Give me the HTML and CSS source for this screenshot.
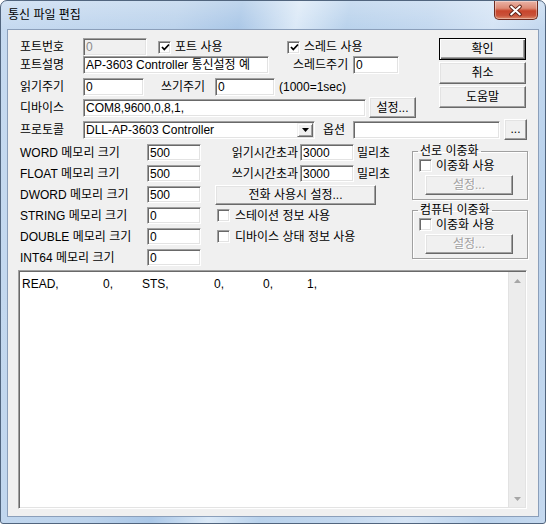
FILE: index.html
```html
<!DOCTYPE html>
<html lang="ko">
<head>
<meta charset="utf-8">
<title>통신 파일 편집</title>
<link rel="stylesheet" href="styles.css">
</head>
<body>
<div class="window">
  <div class="titlebar">
    <span class="title">통신 파일 편집</span>
    <div class="close">
      <svg width="44" height="19" viewBox="0 0 44 19">
        <path d="M17.5 5.5 L26.5 13.5 M26.5 5.5 L17.5 13.5" stroke="#5a1f14" stroke-width="4" stroke-linecap="round"/>
        <path d="M17.5 5.5 L26.5 13.5 M26.5 5.5 L17.5 13.5" stroke="#ffffff" stroke-width="2" stroke-linecap="round"/>
      </svg>
    </div>
  </div>
  <div class="client">
    <div class="top">
      <div class="top-left">
        <div class="row r1">
          <span class="lbl">포트번호</span>
          <div class="field disabled w-port">0</div>
          <span class="check checked ml-chk1"><svg width="9" height="9" viewBox="0 0 9 9"><path d="M1 4 L3.3 6.5 L8 1.5" fill="none" stroke="#000" stroke-width="1.8"/></svg></span>
          <span class="chk-text w-chk1">포트 사용</span>
          <span class="check checked"><svg width="9" height="9" viewBox="0 0 9 9"><path d="M1 4 L3.3 6.5 L8 1.5" fill="none" stroke="#000" stroke-width="1.8"/></svg></span>
          <span class="chk-text">스레드 사용</span>
        </div>
        <div class="row r2">
          <span class="lbl">포트설명</span>
          <div class="field w-desc">AP-3603 Controller 통신설정 예</div>
          <span class="lbl-thread">스레드주기</span>
          <div class="field w-thread">0</div>
        </div>
        <div class="row r3">
          <span class="lbl">읽기주기</span>
          <div class="field w-read">0</div>
          <span class="lbl-write">쓰기주기</span>
          <div class="field w-write">0</div>
          <span class="unit">(1000=1sec)</span>
        </div>
        <div class="row r4">
          <span class="lbl">디바이스</span>
          <div class="field w-dev">COM8,9600,0,8,1,</div>
          <div class="btn btn-set">설정...</div>
        </div>
      </div>
      <div class="buttons">
        <div class="btn btn-main default">확인</div>
        <div class="btn btn-main">취소</div>
        <div class="btn btn-main">도움말</div>
      </div>
    </div>
    <div class="row r5">
      <span class="lbl">프로토콜</span>
      <div class="field combo">
        <span class="combo-text">DLL-AP-3603 Controller</span>
        <span class="combo-btn"><svg width="7" height="4" viewBox="0 0 7 4"><path d="M0 0 H7 L3.5 4 Z" fill="#000"/></svg></span>
      </div>
      <span class="lbl-opt">옵션</span>
      <div class="field w-opt"></div>
      <div class="btn btn-dots">...</div>
    </div>
    <div class="mid">
      <div class="col1">
        <div class="mrow"><span class="lbl-mem">WORD 메모리 크기</span><div class="field small w-mem">500</div></div>
        <div class="mrow"><span class="lbl-mem">FLOAT 메모리 크기</span><div class="field small w-mem">500</div></div>
        <div class="mrow"><span class="lbl-mem">DWORD 메모리 크기</span><div class="field small w-mem">500</div></div>
        <div class="mrow"><span class="lbl-mem">STRING 메모리 크기</span><div class="field small w-mem">0</div></div>
        <div class="mrow"><span class="lbl-mem">DOUBLE 메모리 크기</span><div class="field small w-mem">0</div></div>
        <div class="mrow"><span class="lbl-mem">INT64 메모리 크기</span><div class="field small w-mem">0</div></div>
      </div>
      <div class="col2">
        <div class="mrow"><span class="lbl-time">읽기시간초과</span><div class="field small w-mem">3000</div><span class="ms">밀리초</span></div>
        <div class="mrow"><span class="lbl-time">쓰기시간초과</span><div class="field small w-mem">3000</div><span class="ms">밀리초</span></div>
        <div class="mrow"><div class="btn btn-phone">전화 사용시 설정...</div></div>
        <div class="mrow"><span class="check ml-chk2"></span><span class="chk-text">스테이션 정보 사용</span></div>
        <div class="mrow"><span class="check ml-chk2"></span><span class="chk-text">디바이스 상태 정보 사용</span></div>
      </div>
      <div class="col3">
        <fieldset class="group">
          <legend>선로 이중화</legend>
          <div class="grow"><span class="check"></span><span class="chk-text">이중화 사용</span></div>
          <div class="btn btn-gset disabled-btn">설정...</div>
        </fieldset>
        <fieldset class="group g2">
          <legend>컴퓨터 이중화</legend>
          <div class="grow"><span class="check"></span><span class="chk-text">이중화 사용</span></div>
          <div class="btn btn-gset disabled-btn">설정...</div>
        </fieldset>
      </div>
    </div>
    <div class="memo">
      <div class="memo-text"><span class="t1">READ,</span><span class="t2">0,</span><span class="t3">STS,</span><span class="t4">0,</span><span class="t5">0,</span><span>1,</span></div>
      <div class="scrollbar">
        <div class="sb-arrow"><svg width="7" height="4" viewBox="0 0 7 4"><path d="M0 4 H7 L3.5 0 Z" fill="#a6a6a6"/></svg></div>
        <div class="sb-track"></div>
        <div class="sb-arrow"><svg width="7" height="4" viewBox="0 0 7 4"><path d="M0 0 H7 L3.5 4 Z" fill="#a6a6a6"/></svg></div>
      </div>
    </div>
  </div>
</div>
</body>
</html>
```
FILE: styles.css
```css
html, body {
  margin: 0;
  padding: 0;
}
body {
  width: 546px;
  height: 524px;
  overflow: hidden;
  background: #ffffff;
  font-family: "Liberation Sans", "Noto Sans CJK KR", sans-serif;
  font-size: 12px;
  line-height: 14px;
  color: #000;
}
.window {
  box-sizing: border-box;
  width: 546px;
  height: 524px;
  border: 1px solid #51657e;
  border-radius: 7px 7px 3px 3px;
  background:
    linear-gradient(180deg, rgba(255,255,255,0.25) 0px, rgba(255,255,255,0) 28px),
    linear-gradient(100deg, #c6daf0 0%, #bcd3ec 28%, #aac7e7 38%, #dbe9f7 47%, #b9d2ec 55%, #c3d8ef 68%, #d5e4f5 78%, #bad2ec 90%, #c5d9ef 100%);
  padding: 0 6px 6px 6px;
  display: flex;
  flex-direction: column;
}
.titlebar {
  height: 28px;
  display: flex;
  justify-content: space-between;
  align-items: flex-start;
}
.title {
  margin-top: 7px;
  padding-left: 1px;
  color: #000;
}
.close {
  width: 44px;
  height: 19px;
  margin-right: 1px;
  box-sizing: border-box;
  border: 1px solid #6d2a1f;
  border-top: none;
  border-radius: 0 0 5px 5px;
  background: linear-gradient(180deg, #eab3a6 0%, #dd8a75 40%, #c8452c 55%, #c9523a 80%, #dd8a6a 100%);
  box-shadow: inset 0 0 0 1px rgba(255,255,255,0.35);
  overflow: hidden;
  display: flex;
}
.close svg {
  margin-left: -1px;
  margin-top: 0px;
}
.client {
  box-sizing: border-box;
  height: 488px;
  border: 1px solid #8b9fba;
  background: #f0f0f0;
  padding: 8px 0 0 10px;
}

/* common controls */
.field {
  box-sizing: border-box;
  height: 18px;
  background: #fff;
  border: 1px solid;
  border-color: #a0a0a0 #ffffff #ffffff #a0a0a0;
  box-shadow: inset 1px 1px #696969, inset -1px -1px #e3e3e3;
  padding: 1px 2px 0 2px;
  line-height: 15px;
  white-space: nowrap;
  overflow: hidden;
  flex: none;
}
.field.small {
  height: 17px;
  line-height: 14px;
}
.field.disabled {
  background: #f0f0f0;
  color: #8a8a8a;
}
.btn {
  box-sizing: border-box;
  background: #f0f0f0;
  border: 1px solid;
  border-color: #ffffff #696969 #696969 #ffffff;
  box-shadow: inset -1px -1px #a0a0a0, inset 1px 1px #e3e3e3;
  display: flex;
  align-items: center;
  justify-content: center;
  white-space: nowrap;
  flex: none;
}
.btn.default {
  border-color: #000;
  box-shadow: inset 1px 1px #fff, inset -1px -1px #696969, inset -2px -2px #a0a0a0;
}
.disabled-btn {
  color: #a0a0a0;
  text-shadow: 1px 1px #ffffff;
}
.check {
  box-sizing: border-box;
  width: 13px;
  height: 13px;
  background: #fff;
  border: 1px solid;
  border-color: #a0a0a0 #ffffff #ffffff #a0a0a0;
  box-shadow: inset 1px 1px #696969, inset -1px -1px #e3e3e3;
  display: flex;
  align-items: center;
  justify-content: center;
  flex: none;
}
.check svg {
  margin-left: 1px;
  margin-top: 1px;
}
.chk-text {
  margin-left: 4px;
  white-space: nowrap;
}

/* top section */
.top {
  display: flex;
}
.top-left {
  width: 421px;
}
.row {
  display: flex;
  align-items: center;
  padding-left: 2px;
}
.r1, .r2, .r3 { height: 18px; }
.r3 { margin-top: 4px; }
.r4 { height: 21px; margin-top: 1px; }
.r5 { height: 21px; margin-top: 1px; }
.lbl {
  width: 63px;
  flex: none;
}
.w-port { width: 64px; }
.ml-chk1 { margin-left: 11px; }
.w-chk1 { width: 112px; flex: none; }
.w-desc { width: 186px; }
.lbl-thread { margin-left: 24px; width: 60px; flex: none; }
.w-thread { width: 46px; }
.w-read { width: 61px; }
.lbl-write { margin-left: 17px; width: 54px; flex: none; }
.w-write { width: 60px; }
.unit { margin-left: 4px; }
.w-dev { width: 283px; }
.btn-set { width: 47px; height: 21px; margin-left: 3px; }
.buttons {
  display: flex;
  flex-direction: column;
  gap: 2px;
}
.btn-main { width: 87px; height: 22px; }

/* protocol row */
.combo {
  width: 232px;
  display: flex;
  align-items: center;
  padding-right: 1px;
}
.combo-text { flex: 1; }
.combo-btn {
  box-sizing: border-box;
  width: 16px;
  height: 14px;
  background: #f0f0f0;
  border: 1px solid;
  border-color: #f0f0f0 #696969 #696969 #f0f0f0;
  box-shadow: inset 1px 1px #fff, inset -1px -1px #a0a0a0;
  display: flex;
  align-items: center;
  justify-content: center;
  margin-top: -1px;
}
.lbl-opt { margin-left: 8px; width: 30px; flex: none; }
.w-opt { width: 147px; }
.btn-dots { width: 23px; height: 21px; margin-left: 4px; align-items: flex-end; padding-bottom: 3px; }

/* middle section */
.mid {
  display: flex;
  margin-top: 2px;
}
.mrow {
  height: 21px;
  display: flex;
  align-items: center;
}
.col1 {
  width: 183px;
  padding-left: 2px;
  box-sizing: border-box;
}
.lbl-mem { width: 127px; flex: none; white-space: nowrap; }
.w-mem { width: 54px; }
.col2 { width: 211px; }
.lbl-time {
  width: 99px;
  flex: none;
  text-align: right;
  padding-right: 2px;
  box-sizing: border-box;
}
.ms { margin-left: 3px; }
.btn-phone { width: 161px; height: 20px; margin-left: 14px; }
.ml-chk2 { margin-left: 16px; }
.col2 .chk-text { margin-left: 5px; }
.col3 { width: 116px; padding-top: 2px; }
.group {
  box-sizing: border-box;
  width: 116px;
  min-width: 0;
  margin: 0;
  padding: 0 0 4px 0;
  border: 1px solid #a0a0a0;
  box-shadow: inset 1px 1px #fff, 1px 1px #fff;
}
.group legend {
  padding: 0 2px;
  margin-left: 5px;
  line-height: 14px;
}
.g2 { margin-top: 3px; }
.grow {
  height: 15px;
  display: flex;
  align-items: center;
  padding-left: 6px;
}
.grow .chk-text { margin-left: 4px; }
.btn-gset { width: 88px; height: 20px; margin: 2px 0 0 12px; }

/* memo */
.memo {
  box-sizing: border-box;
  width: 509px;
  height: 239px;
  margin-top: 2px;
  background: #fff;
  border: 1px solid;
  border-color: #a0a0a0 #ffffff #ffffff #a0a0a0;
  box-shadow: inset 1px 1px #696969, inset -1px -1px #e3e3e3;
  display: flex;
  padding: 1px;
}
.memo-text {
  flex: 1;
  padding: 5px 0 0 2px;
  white-space: pre;
}
.memo-text span { display: inline-block; }
.t1 { width: 81px; }
.t2 { width: 39px; }
.t3 { width: 72px; }
.t4 { width: 49px; }
.t5 { width: 44px; }
.scrollbar {
  width: 17px;
  display: flex;
  flex-direction: column;
  background: #ececec;
  border-left: 1px solid #e2e2e2;
  box-sizing: border-box;
}
.sb-arrow {
  height: 17px;
  display: flex;
  align-items: center;
  justify-content: center;
}
.sb-track { flex: 1; }
```
